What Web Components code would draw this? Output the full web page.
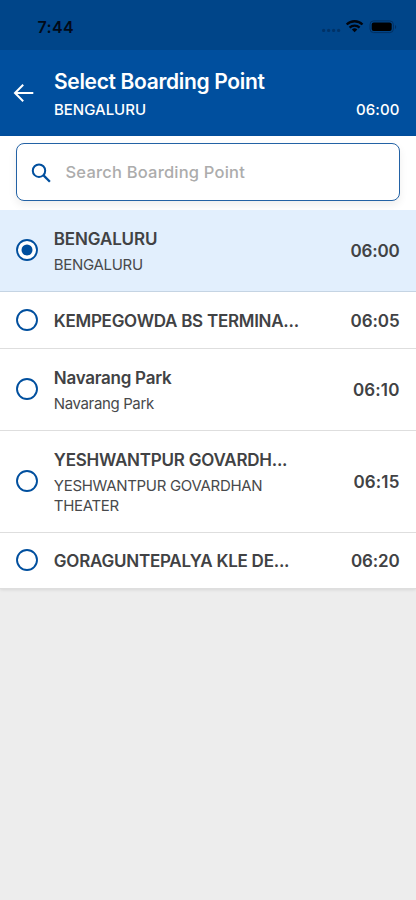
<!DOCTYPE html>
<html lang="en">
<head>
<meta charset="utf-8">
<meta name="viewport" content="width=device-width">
<title>Select Boarding Point</title>
<style>
html,body{margin:0;height:100%}
body{background:#ededed;font-family:Inter,"Liberation Sans",sans-serif;overflow:hidden}
</style>
</head>
<body>
<boarding-screen></boarding-screen>
<script>
const define = (name, html, setup) => customElements.define(name, class extends HTMLElement {
  connectedCallback() {
    if (!this.shadowRoot) {
      const t = document.createElement('template');
      t.innerHTML = html;
      this.attachShadow({mode: 'open'}).append(t.content.cloneNode(true));
    }
    if (setup) setup(this, this.shadowRoot);
  }
});

/* Tracks its text so that the line is as wide as the "w" attribute says. */
define('tracked-text', `<style>:host{display:inline-block;white-space:nowrap}span{display:inline-block}</style><span><slot></slot></span>`,
  (el, root) => {
    const span = root.querySelector('span');
    span.style.letterSpacing = '0px';
    const natural = span.getBoundingClientRect().width;
    const n = el.textContent.length;
    if (natural) span.style.letterSpacing = ((+el.getAttribute('w') - natural) / n).toFixed(3) + 'px';
  });

define('status-bar', `<style>
:host{display:flex;height:50px;box-sizing:border-box;padding:3px 19px 0 37.5px;align-items:center;background:#004589;color:#020a18;font-size:16px;font-weight:600}
.time{flex:1}svg{display:block}
</style>
<div class="time"><tracked-text w="36.5">7:44</tracked-text></div>
<svg width="76" height="16" viewBox="0 0 76 16">
<g fill="#003267"><circle cx="2.6" cy="11.4" r="1.6"/><circle cx="7.6" cy="11.4" r="1.6"/><circle cx="12.6" cy="11.4" r="1.6"/><circle cx="17.6" cy="11.4" r="1.6"/></g>
<g fill="none" stroke="#00050d" stroke-width="2.3"><path d="M25.700 5.500a11.200 11.200 0 0 1 15.800 0"/><path d="M28.600 8.600a7.200 7.200 0 0 1 10 0"/></g>
<path d="M30.900 10.500a4 4 0 0 1 5.400 0l-2.700 2.800z" fill="#00050d"/>
<rect x="49" y="1.900" width="23.400" height="11.700" rx="3.600" fill="none" stroke="#003062"/>
<rect x="50.700" y="3.600" width="20" height="8.300" rx="2" fill="#000"/>
<path d="M74 6v4c1.600-.6 1.600-3.400 0-4" fill="#003062"/>
</svg>`);

define('app-header', `<style>
:host{display:flex;height:85.6px;box-sizing:border-box;padding:19px 16.5px 0 13px;background:#004f9e;color:#fff}
svg{display:block;width:21px;height:20px;margin:14px 20px 0 0}
main{flex:1}h1{font-size:21px;line-height:26px;font-weight:560;margin:0}
.sub{display:flex;justify-content:space-between;font-size:15px;line-height:20px;font-weight:550;margin-top:5px}
</style>
<svg viewBox="0 0 21 20" fill="none" stroke="#fff" stroke-width="2"><path d="M20.3 10H2.2M10.2 1.8 2 10l8.200 8.200"/></svg>
<main><h1><tracked-text w="210.5">Select Boarding Point</tracked-text></h1>
<div class="sub"><tracked-text w="92">BENGALURU</tracked-text><tracked-text w="43.5">06:00</tracked-text></div></main>`);

define('search-field', `<style>
:host{display:block;height:74.4px;box-sizing:border-box;padding:7.4px 16px 0;background:#fff}
.box{display:flex;align-items:center;height:58px;box-sizing:border-box;border:1.3px solid #2362a5;border-radius:8px;padding:0 14px;background:#fff;box-shadow:0 4px 8px #00000012;color:#acacac;font-size:16.500px;font-weight:500}
svg{display:block;margin:3px 14.5px 0 0}
</style>
<div class="box"><svg width="20" height="20" viewBox="0 0 20 20" fill="none" stroke="#004f9e"><circle cx="8" cy="7.700" r="6.200" stroke-width="2"/><path d="m12.300 12.100 6.600 6.600" stroke-width="2.300"/></svg>
<tracked-text w="179.5">Search Boarding Point</tracked-text></div>`);

define('radio-mark', `<style>:host{display:block;width:22px;height:22px}svg{display:block}.dot{display:none}:host([checked]) .dot{display:block}</style>
<svg width="22" height="22"><circle cx="11" cy="11" r="10" fill="#fff" stroke="#004f9e" stroke-width="1.900"/><circle class="dot" cx="11" cy="11" r="5.500" fill="#004f9e"/></svg>`,
  (el) => { if (el.getRootNode().host?.hasAttribute('checked')) el.setAttribute('checked', ''); });

define('boarding-row', `<style>
:host{display:flex;box-sizing:border-box;align-items:center;padding:0 16.5px 0 16px;border-bottom:1px solid #dedede;background:#fff;color:#414244}
:host([checked]){background:#e2effd;border-color:#c5d4e3}
.place{flex:1;margin-left:15.800px;display:flex;flex-direction:column;gap:5px;padding-top:3px}
.name{font-size:17px;font-weight:600;line-height:21px;display:block}
.detail{font-size:15px;line-height:20.400px;display:block;color:#48494b}
::slotted(*){display:block}
.time{font-size:17px;line-height:21px;font-weight:600;padding-top:3px}
</style>
<radio-mark></radio-mark>
<div class="place"><div class="name"><slot name="name"></slot></div><div class="detail"><slot name="detail"></slot></div></div>
<div class="time"><slot name="time"></slot></div>`,
  (el, root) => {
    el.style.height = el.getAttribute('h') + 'px';
    if (!el.querySelector('[slot=detail]')) root.querySelector('.detail').style.display = 'none';
  });

define('boarding-screen', `<style>:host{display:block}.list{box-shadow:0 1px 3px #00000018}</style>
<status-bar></status-bar><app-header></app-header>
<div class="list">
<search-field></search-field>
<boarding-row checked h="82"><tracked-text slot="name" w="103.5">BENGALURU</tracked-text><tracked-text slot="detail" w="89">BENGALURU</tracked-text><tracked-text slot="time" w="49">06:00</tracked-text></boarding-row>
<boarding-row h="57"><tracked-text slot="name" w="245">KEMPEGOWDA BS TERMINA...</tracked-text><tracked-text slot="time" w="49">06:05</tracked-text></boarding-row>
<boarding-row h="82"><tracked-text slot="name" w="117.5">Navarang Park</tracked-text><tracked-text slot="detail" w="100">Navarang Park</tracked-text><tracked-text slot="time" w="46.5">06:10</tracked-text></boarding-row>
<boarding-row h="102"><tracked-text slot="name" w="233.5">YESHWANTPUR GOVARDH...</tracked-text><div slot="detail"><tracked-text w="208.5">YESHWANTPUR GOVARDHAN</tracked-text><br><tracked-text w="65">THEATER</tracked-text></div><tracked-text slot="time" w="46">06:15</tracked-text></boarding-row>
<boarding-row h="56"><tracked-text slot="name" w="235.5">GORAGUNTEPALYA KLE DE...</tracked-text><tracked-text slot="time" w="48.500">06:20</tracked-text></boarding-row>
</div>`);
</script>
</body>
</html>
